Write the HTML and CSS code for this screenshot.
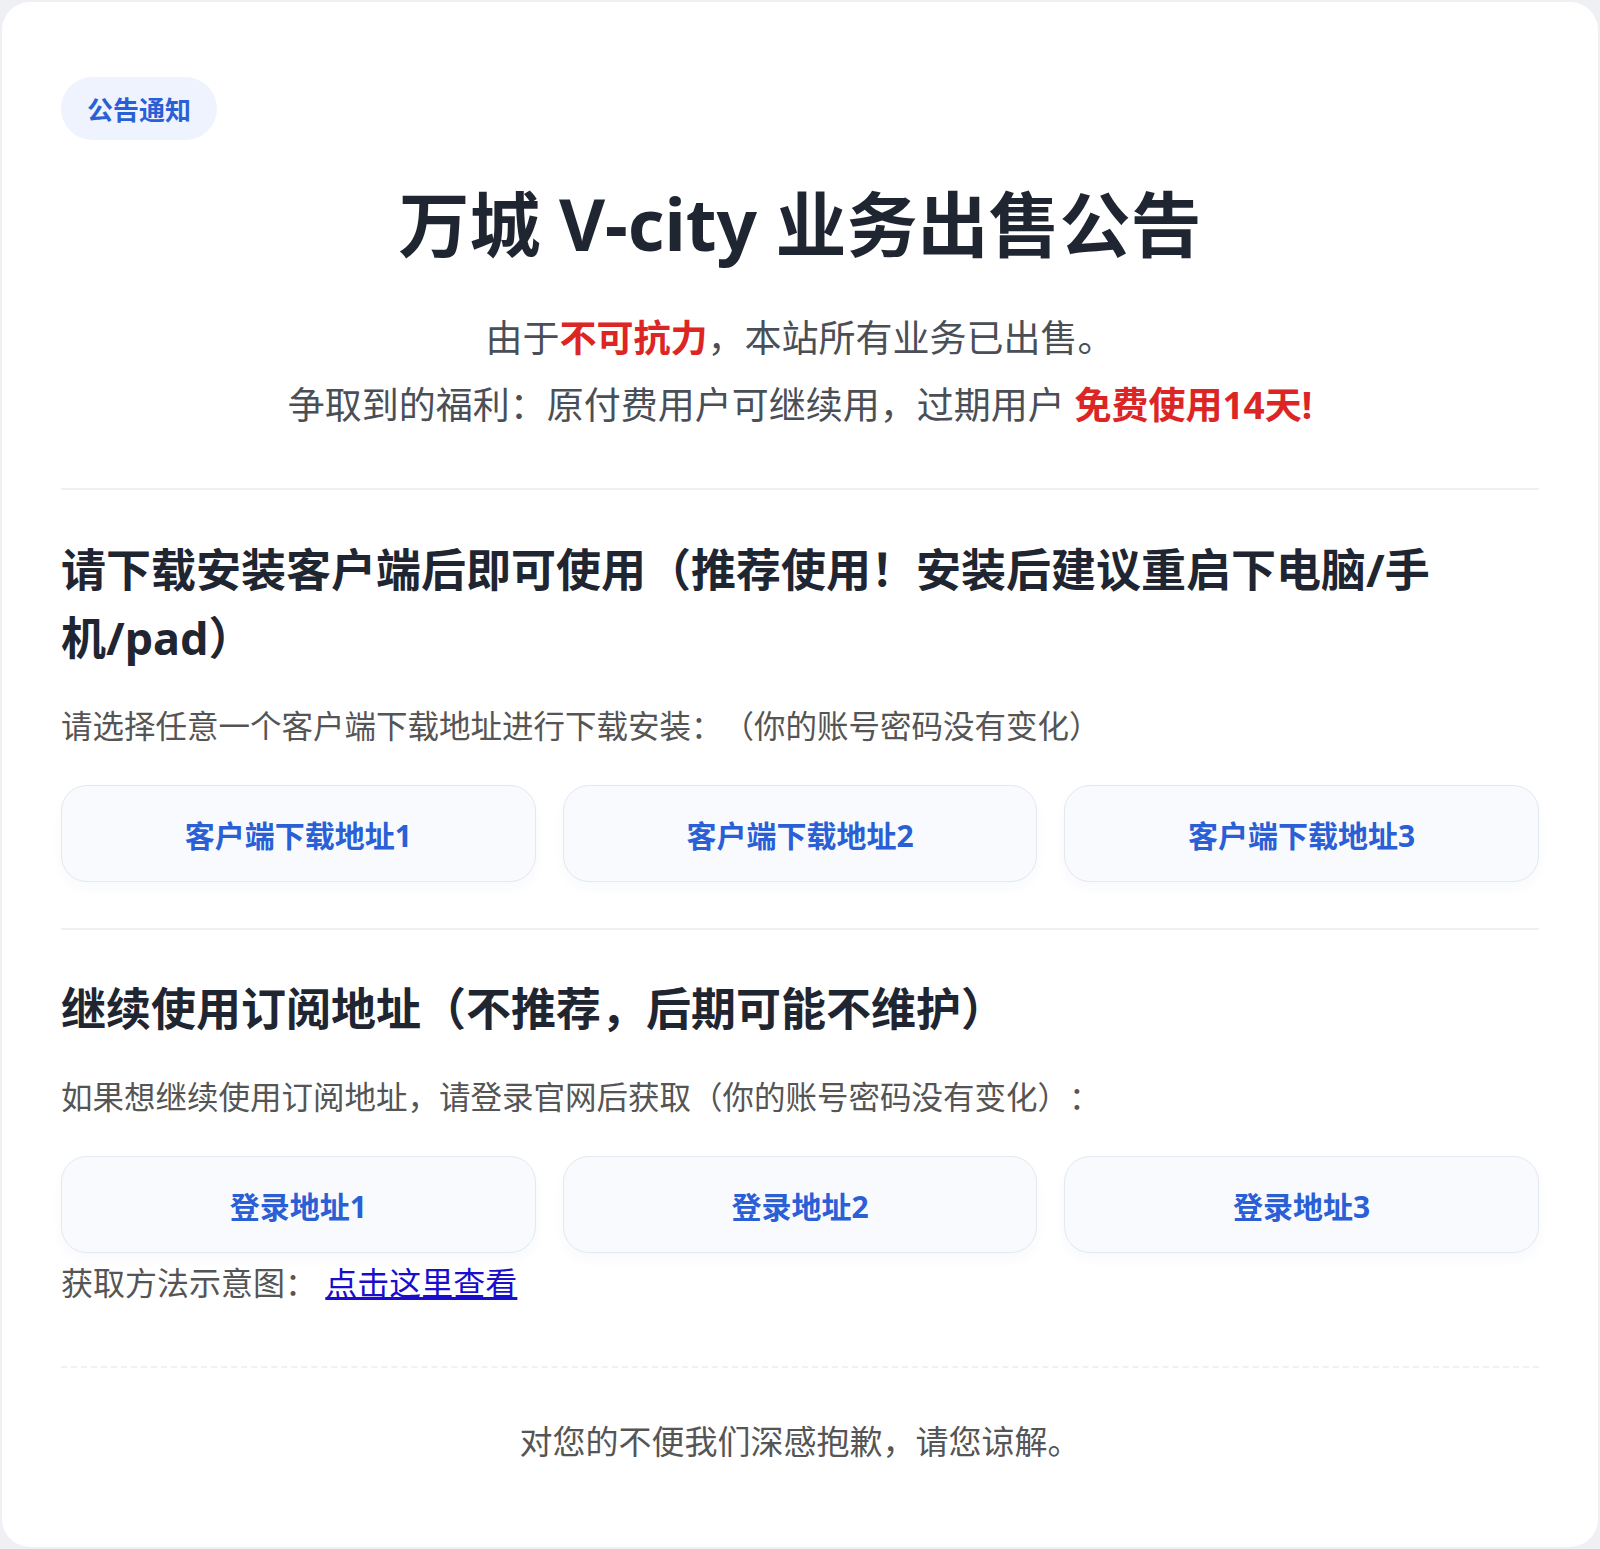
FILE: index.html
```html
<!DOCTYPE html>
<html lang="zh-CN">
<head>
    <meta charset="UTF-8">
    <meta name="viewport" content="width=device-width, initial-scale=1.0">
    <title>万城 V-city 业务出售公告</title>
    <link rel="stylesheet" href="styles.css">
</head>
<body>
    <div class="card">
        <span class="badge">公告通知</span>

        <h1>万城 V-city 业务出售公告</h1>

        <div class="intro">
            <p>由于<strong class="red">不可抗力</strong>，本站所有业务已出售。</p>
            <p>争取到的福利：原付费用户可继续用，过期用户 <strong class="red">免费使用14天!</strong></p>
        </div>

        <div class="section">
            <h2>请下载安装客户端后即可使用（推荐使用！安装后建议重启下电脑/手机/pad）</h2>
            <p class="desc">请选择任意一个客户端下载地址进行下载安装：（你的账号密码没有变化）</p>
            <div class="btn-row">
                <a class="btn" href="#">客户端下载地址1</a>
                <a class="btn" href="#">客户端下载地址2</a>
                <a class="btn" href="#">客户端下载地址3</a>
            </div>
        </div>

        <div class="section">
            <h2>继续使用订阅地址（不推荐，后期可能不维护）</h2>
            <p class="desc">如果想继续使用订阅地址，请登录官网后获取（你的账号密码没有变化）：</p>
            <div class="btn-row">
                <a class="btn" href="#">登录地址1</a>
                <a class="btn" href="#">登录地址2</a>
                <a class="btn" href="#">登录地址3</a>
            </div>
            <p class="hint">获取方法示意图： <a href="#">点击这里查看</a></p>
        </div>

        <p class="footer">对您的不便我们深感抱歉，请您谅解。</p>
    </div>
</body>
</html>
```

FILE: styles.css
```css
body {
    margin: 0;
    padding: 2px;
    background-color: #eef0f3;
    font-family: "Noto Sans", "Noto Sans CJK SC", sans-serif;
    color: #555;
}
.card {
    background-color: #ffffff;
    border-radius: 28px;
    padding: 75px 59px 77px;
    min-height: 1393px;
}
.badge {
    display: inline-block;
    height: 63px;
    line-height: 63px;
    padding: 0 26px;
    border-radius: 32px;
    background-color: #eef3fd;
    color: #2a5fd6;
    font-size: 26px;
    font-weight: bold;
    font-family: "Noto Sans CJK SC", sans-serif;
}
h1 {
    margin: 41px 0 0;
    text-align: center;
    font-size: 71px;
    line-height: 86px;
    color: #1f2631;
}
.intro {
    margin-top: 37px;
    padding-bottom: 50px;
    text-align: center;
    font-size: 37px;
    line-height: 67px;
    color: #4a4f57;
}
.intro p {
    margin: 0;
}
.red {
    color: #dc2626;
}
.section {
    border-top: 2px solid #eef0f3;
    padding-top: 46px;
    padding-bottom: 46px;
}
.section + .section {
    padding-top: 45px;
    padding-bottom: 58px;
}
h2 {
    margin: 0;
    font-size: 45px;
    line-height: 68px;
    color: #1f2631;
}
.desc {
    margin: 28px 0 0;
    font-size: 31.5px;
    line-height: 51px;
    text-spacing-trim: space-all;
}
.btn-row {
    display: grid;
    grid-template-columns: repeat(3, 1fr);
    gap: 27px;
    margin-top: 34px;
}
.btn {
    display: flex;
    align-items: center;
    justify-content: center;
    height: 95px;
    border: 1px solid #e3e8f1;
    border-radius: 26px;
    background-color: #f8fafd;
    box-shadow: 0 6px 12px rgba(30, 60, 120, 0.03);
    color: #2a5fd6;
    font-size: 30px;
    font-weight: bold;
    text-decoration: none;
}
.hint {
    margin: 4px 0 0;
    font-size: 32px;
    line-height: 51px;
}
.hint a {
    color: #1a0dcc;
}
.footer {
    margin: 0;
    border-top: 2px dashed #f0f1f3;
    padding-top: 48px;
    text-align: center;
    font-size: 33px;
    line-height: 51px;
}
```
